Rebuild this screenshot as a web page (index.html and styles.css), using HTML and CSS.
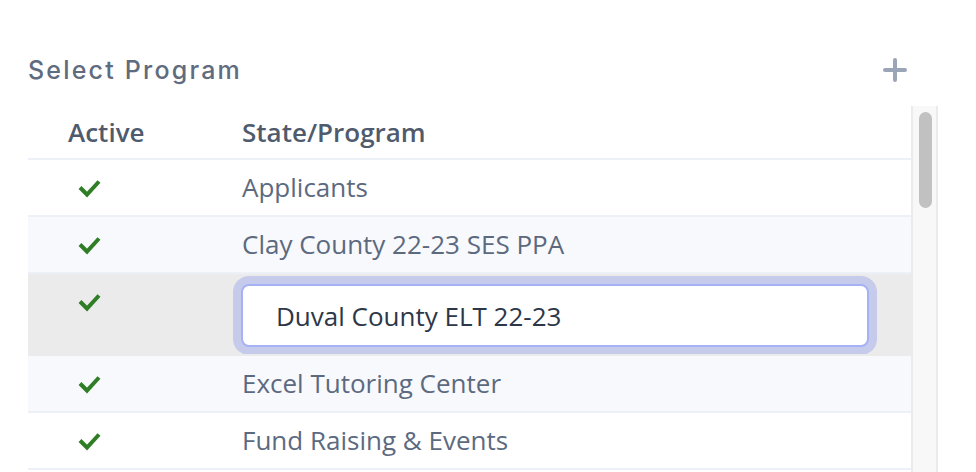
FILE: index.html
```html
<!DOCTYPE html>
<html lang="en">
<head>
    <meta charset="UTF-8">
    <meta name="viewport" content="width=device-width, initial-scale=1.0">
    <title>Select Program</title>
    <link rel="stylesheet" href="styles.css">
</head>
<body>
    <div class="panel">
        <div class="panel-head">
            <h2>Select Program</h2>
            <button class="add-btn" title="Add program">
                <svg width="26" height="26" viewBox="0 0 26 26">
                    <path d="M13 3v20M3 13h20" stroke="#9ba5b8" stroke-width="4" stroke-linecap="round" fill="none"/>
                </svg>
            </button>
        </div>
        <div class="list-wrap">
            <table class="programs">
                <thead>
                    <tr>
                        <th class="col-active">Active</th>
                        <th class="col-name">State/Program</th>
                    </tr>
                </thead>
                <tbody>
                    <tr>
                        <td class="col-active"><svg class="check" viewBox="0 0 24 20"><path d="M3 9.5l7 7L22 3.5"/></svg></td>
                        <td class="col-name">Applicants</td>
                    </tr>
                    <tr class="alt">
                        <td class="col-active"><svg class="check" viewBox="0 0 24 20"><path d="M3 9.5l7 7L22 3.5"/></svg></td>
                        <td class="col-name">Clay County 22-23 SES PPA</td>
                    </tr>
                    <tr class="editing">
                        <td class="col-active"><svg class="check" viewBox="0 0 24 20"><path d="M3 9.5l7 7L22 3.5"/></svg></td>
                        <td class="col-name edit-cell">
                            <input type="text" class="name-input" value="Duval County ELT 22-23">
                        </td>
                    </tr>
                    <tr class="alt">
                        <td class="col-active"><svg class="check" viewBox="0 0 24 20"><path d="M3 9.5l7 7L22 3.5"/></svg></td>
                        <td class="col-name">Excel Tutoring Center</td>
                    </tr>
                    <tr>
                        <td class="col-active"><svg class="check" viewBox="0 0 24 20"><path d="M3 9.5l7 7L22 3.5"/></svg></td>
                        <td class="col-name">Fund Raising &amp; Events</td>
                    </tr>
                </tbody>
            </table>
            <div class="scrollbar">
                <div class="thumb"></div>
            </div>
        </div>
    </div>
</body>
</html>
```

FILE: styles.css
```css
body {
    margin: 0;
    font-family: "Open Sans", sans-serif;
    background: #fff;
    overflow: hidden;
}
.panel {
    padding: 48px 38px 0 28px;
}
.panel-head {
    display: flex;
    align-items: center;
    justify-content: space-between;
    height: 44px;
    padding-right: 30px;
    margin-bottom: 14px;
}
.panel-head h2 {
    margin: 0;
    font-family: "Inter", sans-serif;
    font-weight: 500;
    font-size: 25px;
    letter-spacing: 2.2px;
    color: #5f6b7e;
}
.add-btn {
    background: none;
    border: none;
    padding: 0;
    width: 26px;
    height: 26px;
    cursor: pointer;
}
.list-wrap {
    display: flex;
    height: 380px;
}
.programs {
    flex: 1;
    border-collapse: collapse;
    align-self: flex-start;
}
.programs th {
    height: 52px;
    text-align: left;
    font-size: 26px;
    font-weight: 600;
    color: #4f5b6d;
    border-bottom: 2px solid #edf1f7;
    padding: 0;
}
.programs td {
    height: 55px;
    padding: 0;
    vertical-align: top;
    font-size: 26px;
    line-height: 55px;
    color: #5c6a80;
    border-bottom: 2px solid #edf1f7;
}
.programs .col-active {
    width: 174px;
    padding-left: 40px;
}
.programs .col-name {
    padding-left: 0;
}
.programs tr.alt td {
    background: #f8f9fc;
}
.programs tr.editing td {
    background: #ebebeb;
    border-bottom-color: #ebebeb;
}
.programs td.edit-cell {
    height: auto;
    padding: 10px 40px 7px 0;
    line-height: normal;
}
.check {
    display: block;
    width: 24px;
    height: 20px;
    margin: 18px 0 0 9px;
    fill: none;
    stroke: #2f7d24;
    stroke-width: 4;
}
.name-input {
    display: block;
    box-sizing: border-box;
    width: 628px;
    height: 63px;
    margin-left: -1px;
    padding: 0 33px;
    font-family: "Open Sans", sans-serif;
    font-size: 26px;
    color: #2d3748;
    background: #fff;
    border: 2px solid #a5b2f5;
    border-radius: 8px;
    box-shadow: 0 0 0 8px #c6cbec;
    outline: none;
}
.scrollbar {
    width: 27px;
    box-sizing: border-box;
    background: #f8f8f8;
    border-left: 2px solid #ebebeb;
    border-right: 2px solid #ebebeb;
    padding: 6px 4px 0 6px;
}
.thumb {
    height: 96px;
    border-radius: 8px;
    background: #c1c1c1;
}
```
